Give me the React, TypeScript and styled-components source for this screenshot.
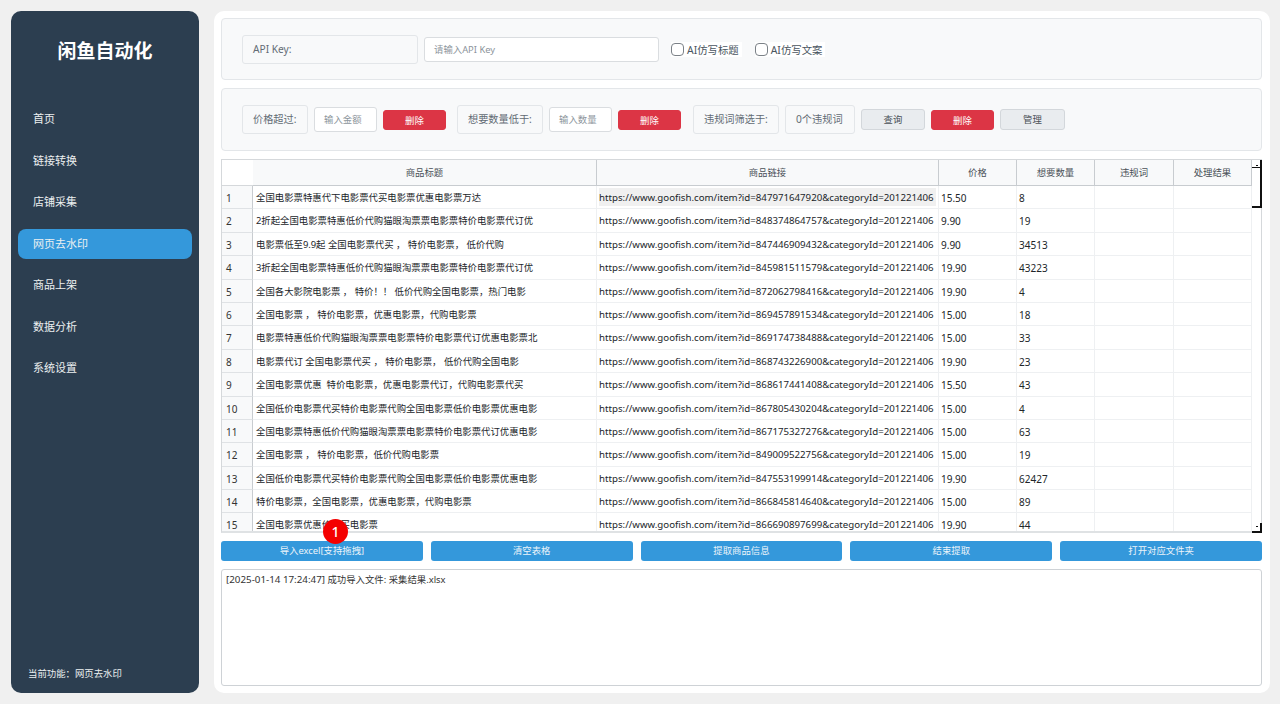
import styled, { createGlobalStyle } from 'styled-components';

const CJK = `"Noto Sans", "Noto Sans CJK SC", sans-serif`;

const navItems = ['首页', '链接转换', '店铺采集', '网页去水印', '商品上架', '数据分析', '系统设置'];

const rows = [
  ['全国电影票特惠代下电影票代买电影票优惠电影票万达', '847971647920', '15.50', '8'],
  ['2折起全国电影票特惠低价代购猫眼淘票票电影票特价电影票代订优', '848374864757', '9.90', '19'],
  ['电影票低至9.9起 全国电影票代买 ， 特价电影票， 低价代购', '847446909432', '9.90', '34513'],
  ['3折起全国电影票特惠低价代购猫眼淘票票电影票特价电影票代订优', '845981511579', '19.90', '43223'],
  ['全国各大影院电影票 ， 特价！！ 低价代购全国电影票，热门电影', '872062798416', '19.90', '4'],
  ['全国电影票 ， 特价电影票，优惠电影票，代购电影票', '869457891534', '15.00', '18'],
  ['电影票特惠低价代购猫眼淘票票电影票特价电影票代订优惠电影票北', '869174738488', '15.00', '33'],
  ['电影票代订 全国电影票代买 ， 特价电影票， 低价代购全国电影', '868743226900', '19.90', '23'],
  ['全国电影票优惠  特价电影票，优惠电影票代订，代购电影票代买', '868617441408', '15.50', '43'],
  ['全国低价电影票代买特价电影票代购全国电影票低价电影票优惠电影', '867805430204', '15.00', '4'],
  ['全国电影票特惠低价代购猫眼淘票票电影票特价电影票代订优惠电影', '867175327276', '15.00', '63'],
  ['全国电影票 ， 特价电影票，低价代购电影票', '849009522756', '15.00', '19'],
  ['全国低价电影票代买特价电影票代购全国电影票低价电影票优惠电影', '847553199914', '19.90', '62427'],
  ['特价电影票，全国电影票，优惠电影票，代购电影票', '866845814640', '15.00', '89'],
  ['全国电影票优惠价代买电影票', '866690897699', '19.90', '44'],
];

const GlobalStyle = createGlobalStyle`
  html, body {
    margin: 0;
    padding: 0;
    height: 100%;
    background: #f0f0f0;
    font-family: ${CJK};
    overflow: hidden;
  }
  * { box-sizing: border-box; }
`;

const Page = styled.div`
  width: 1280px;
  height: 704px;
  padding: 11px 10px 11px 11px;
  display: flex;
  gap: 15px;
`;

const Sidebar = styled.aside`
  width: 188px;
  background: #2c3e50;
  border-radius: 10px;
  padding: 0 7px 13px;
  display: flex;
  flex-direction: column;
`;

const Logo = styled.h1`
  margin: 26px 0 39px;
  height: 28px;
  line-height: 28px;
  text-align: center;
  color: #fff;
  font-size: 19px;
  font-weight: 700;
`;

const Nav = styled.nav`
  display: flex;
  flex-direction: column;
  gap: 11.5px;
  flex: 1;
`;

const NavItem = styled.div<{ $active?: boolean }>`
  height: 30px;
  line-height: 30px;
  padding-left: 15px;
  border-radius: 8px;
  font-size: 11px;
  color: #ecf0f1;
  background: ${(p) => (p.$active ? '#3498db' : 'transparent')};
`;

const CurrentFeature = styled.div`
  padding-left: 10px;
  font-size: 9.4px;
  color: #ecf0f1;
`;

const Main = styled.main`
  flex: 1;
  background: #fff;
  border-radius: 10px;
  padding: 7px 8px 7px 7px;
  display: flex;
  flex-direction: column;
  gap: 8px;
`;

const Card = styled.section<{ $height: number }>`
  height: ${(p) => p.$height}px;
  flex: none;
  background: #f8f9fa;
  border: 1px solid #e3e6e9;
  border-radius: 4px;
  padding: 0 20px;
  display: flex;
  align-items: center;
  gap: 6px;
`;

const Tag = styled.div<{ $width: number; $gap?: number }>`
  width: ${(p) => p.$width}px;
  height: 29px;
  margin-right: ${(p) => p.$gap ?? 0}px;
  line-height: 27px;
  padding-left: 10px;
  flex: none;
  background: #f8f9fa;
  border: 1px solid #e3e6e9;
  border-radius: 3px;
  font-size: 10.2px;
  color: #636c75;
  white-space: nowrap;
`;

const Field = styled.div<{ $width: number }>`
  width: ${(p) => p.$width}px;
  height: 25px;
  line-height: 23px;
  padding-left: 9px;
  flex: none;
  background: #fff;
  border: 1px solid #dadde0;
  border-radius: 3px;
  font-size: 9.4px;
  color: #8d959c;
`;

const Check = styled.label<{ $first?: boolean }>`
  margin-left: ${(p) => (p.$first ? 6 : 7)}px;
  padding-right: 3px;
  display: flex;
  align-items: center;
  gap: 3px;
  font-size: 10.4px;
  color: #4a5560;
  background: #fff;
`;

const Box = styled.span`
  width: 13px;
  height: 13px;
  border: 1px solid #7b8187;
  border-radius: 4px;
  background: #fff;
`;

const SmallButton = styled.div<{ $danger?: boolean; $gap?: number; $width?: number }>`
  width: ${(p) => p.$width ?? 63}px;
  height: ${(p) => (p.$danger ? 20 : 21)}px;
  margin-right: ${(p) => p.$gap ?? 0}px;
  line-height: 19px;
  flex: none;
  text-align: center;
  border-radius: 3px;
  font-size: 9.4px;
  color: ${(p) => (p.$danger ? '#fff' : '#495057')};
  background: ${(p) => (p.$danger ? '#dc3545' : '#e9ecef')};
  border: 1px solid ${(p) => (p.$danger ? '#dc3545' : '#d3d7db')};
`;

const TableFrame = styled.div`
  flex: none;
  height: 374px;
  border: 1px solid #d5d8db;
  border-right: none;
  border-bottom-width: 2px;
  border-bottom-color: #dfe2e4;
  display: flex;
`;

const TableBody = styled.div`
  flex: 1;
  min-width: 0;
  overflow: hidden;
  display: grid;
  grid-template-columns: 31px 344px 342px 78px 78px 79px 78px;
  grid-auto-rows: 23.4px;
  grid-template-rows: 26px;
  font-size: 9.4px;
  color: #212529;
`;

const Corner = styled.div`
  background: #fff;
  border-bottom: 1px solid #d5d8db;
`;

const HeadCell = styled.div`
  line-height: 25px;
  text-align: center;
  background: #f8f9fa;
  color: #495057;
  border-right: 1px solid #c8ccd0;
  border-bottom: 1px solid #c8ccd0;
`;

const RowHead = styled.div`
  line-height: 24px;
  padding-left: 4px;
  font-size: 10px;
  background: #f8f9fa;
  color: #333;
  border-right: 1px solid #c8ccd0;
  border-bottom: 1px solid #dfe2e5;
`;

const Cell = styled.div<{ $selected?: boolean; $size?: number }>`
  line-height: 24px;
  padding-left: ${(p) => (p.$size ? 2 : 3)}px;
  white-space: pre;
  overflow: hidden;
  font-size: ${(p) => p.$size ?? 9.4}px;
  background: ${(p) => (p.$selected ? '#f0f0f0' : '#fff')};
  box-shadow: ${(p) => (p.$selected ? 'inset 0 0 0 2px #fff' : 'none')};
  border-right: 1px solid #eef0f2;
  border-bottom: 1px solid #eef0f2;
`;

const Scrollbar = styled.div`
  width: 10px;
  flex: none;
  position: relative;
  background: #fff;
  border-right: 1px solid #d5d8db;
`;

const Arrow = styled.span<{ $bottom?: boolean }>`
  position: absolute;
  left: 4px;
  width: 2px;
  height: 1px;
  background: #111;
  ${(p) => (p.$bottom ? 'bottom: 4px;' : 'top: 5px;')}
`;

const Thumb = styled.div`
  position: absolute;
  top: 0;
  left: 0;
  right: -1px;
  height: 48px;
  border-bottom: 2px solid #111;
  border-right: 2px solid #111;
`;

const ThumbTop = styled.div`
  position: absolute;
  top: 7px;
  left: 0;
  right: -1px;
  height: 1px;
  background: #111;
`;

const EndCap = styled.div`
  position: absolute;
  bottom: -2px;
  left: 0;
  right: -1px;
  height: 10px;
  border-bottom: 2px solid #111;
  border-right: 2px solid #111;
`;

const Actions = styled.div`
  flex: none;
  display: grid;
  grid-template-columns: repeat(5, 1fr);
  gap: 8px;
  position: relative;
`;

const ActionButton = styled.div`
  height: 20px;
  line-height: 20px;
  text-align: center;
  background: #3498db;
  border-radius: 3px;
  color: #ecf4fa;
  font-size: 9.4px;
`;

const Badge = styled.div`
  position: absolute;
  left: 102px;
  top: -22px;
  width: 25px;
  height: 25px;
  border-radius: 50%;
  background: #f40000;
  color: #fff;
  font-size: 14px;
  font-weight: 500;
  line-height: 25px;
  text-align: center;
`;

const Log = styled.div`
  flex: 1;
  background: #fff;
  border: 1px solid #ced2d6;
  border-radius: 3px;
  padding: 3px 4px;
  font-size: 9.4px;
  line-height: 13px;
  color: #333;
`;

const LogStamp = styled.span`
  font-size: 9.8px;
`;

const headers = ['商品标题', '商品链接', '价格', '想要数量', '违规词', '处理结果'];

export default function App() {
  return (
    <>
      <GlobalStyle />
      <Page>
        <Sidebar>
          <Logo>闲鱼自动化</Logo>
          <Nav>
            {navItems.map((item) => (
              <NavItem key={item} $active={item === '网页去水印'}>
                {item}
              </NavItem>
            ))}
          </Nav>
          <CurrentFeature>当前功能：网页去水印</CurrentFeature>
        </Sidebar>
        <Main>
          <Card $height={62}>
            <Tag $width={176}>API Key:</Tag>
            <Field $width={235}>请输入API Key</Field>
            <Check $first>
              <Box />
              AI仿写标题
            </Check>
            <Check>
              <Box />
              AI仿写文案
            </Check>
          </Card>
          <Card $height={63}>
            <Tag $width={66}>价格超过:</Tag>
            <Field $width={63}>输入金额</Field>
            <SmallButton $danger $gap={5}>删除</SmallButton>
            <Tag $width={86}>想要数量低于:</Tag>
            <Field $width={63}>输入数量</Field>
            <SmallButton $danger $gap={6}>删除</SmallButton>
            <Tag $width={86}>违规词筛选于:</Tag>
            <Tag $width={70}>0个违规词</Tag>
            <SmallButton $width={64}>查询</SmallButton>
            <SmallButton $danger>删除</SmallButton>
            <SmallButton $width={65}>管理</SmallButton>
          </Card>
          <TableFrame>
            <TableBody>
              <Corner />
              {headers.map((h) => (
                <HeadCell key={h}>{h}</HeadCell>
              ))}
              {rows.map((row, i) => (
                <Row key={row[1]} index={i} row={row} />
              ))}
            </TableBody>
            <Scrollbar>
              <Arrow />
              <Thumb />
              <ThumbTop />
              <EndCap />
              <Arrow $bottom />
            </Scrollbar>
          </TableFrame>
          <Actions>
            <ActionButton>导入excel[支持拖拽]</ActionButton>
            <ActionButton>清空表格</ActionButton>
            <ActionButton>提取商品信息</ActionButton>
            <ActionButton>结束提取</ActionButton>
            <ActionButton>打开对应文件夹</ActionButton>
            <Badge>1</Badge>
          </Actions>
          <Log>
            <LogStamp>[2025-01-14 17:24:47]</LogStamp> 成功导入文件: 采集结果.xlsx
          </Log>
        </Main>
      </Page>
    </>
  );
}

function Row({ index, row }: { index: number; row: string[] }) {
  return (
    <>
      <RowHead>{index + 1}</RowHead>
      <Cell>{row[0]}</Cell>
      <Cell $selected={index === 0} $size={9.68}>
        https://www.goofish.com/item?id={row[1]}&categoryId=201221406
      </Cell>
      <Cell $size={10}>{row[2]}</Cell>
      <Cell $size={10}>{row[3]}</Cell>
      <Cell />
      <Cell />
    </>
  );
}
